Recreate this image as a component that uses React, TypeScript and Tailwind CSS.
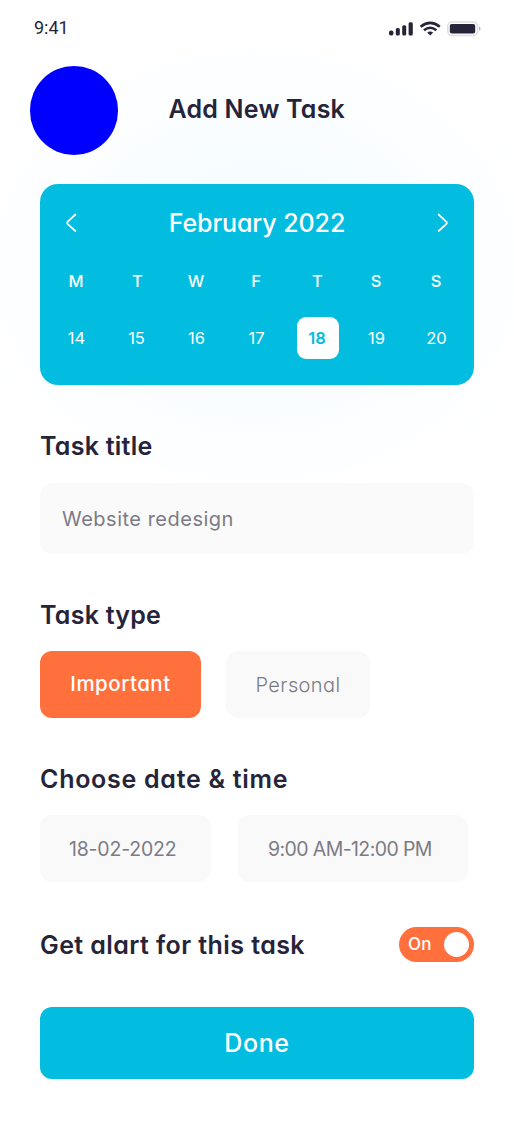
import { useState } from "react";

const days = [
  { name: "M", date: 14 },
  { name: "T", date: 15 },
  { name: "W", date: 16 },
  { name: "F", date: 17 },
  { name: "T", date: 18 },
  { name: "S", date: 19 },
  { name: "S", date: 20 },
];

function StatusBar() {
  return (
    <div className="flex h-14 items-center justify-between pl-[34px] pr-[33px]">
      <span className="font-[Roboto] text-[18px] leading-[18px]">9:41</span>
      <svg width="92" height="16" viewBox="0 0 92 16" className="mt-px" fill="#262438">
        <rect x="0" y="9.5" width="4.4" height="5" rx="1.8" />
        <rect x="6.8" y="7" width="4" height="7.5" rx="1.5" />
        <rect x="13.2" y="4.3" width="4" height="10.2" rx="1.5" />
        <rect x="19.6" y="1.2" width="4.2" height="13.3" rx="1.5" />
        <g fill="none" stroke="#262438" strokeWidth="2.5">
          <path d="M31.6 5.7 Q41.2 -2 50.8 5.7" />
          <path d="M35 9.3 Q41.2 4.2 47.4 9.3" />
        </g>
        <path d="M38.2 11.6 Q41.2 9.4 44.2 11.6 L41.2 14.6 Z" />
        <rect x="58.8" y="1" width="29.6" height="13.4" rx="4" fill="none" stroke="#dedee1" strokeWidth="1.5" />
        <rect x="60.8" y="3" width="25.4" height="9.6" rx="2" />
        <path d="M90 5.6 Q91.6 6 91.6 7.7 Q91.6 9.4 90 9.8 Z" fill="#b5b4bb" />
      </svg>
    </div>
  );
}

function Chevron({ flip = false }: { flip?: boolean }) {
  return (
    <svg width="12" height="20" viewBox="0 0 12 20" fill="none" stroke="white" strokeWidth="1.8" strokeLinecap="round" strokeLinejoin="round" className={flip ? "-scale-x-100" : ""}>
      <path d="M10.4 1.5 L3 8.4 Q1.4 10 3 11.4 L10.4 18" />
    </svg>
  );
}

function Calendar() {
  return (
    <section className="h-[201px] rounded-[18px] bg-[#03bde0] text-white">
      <div className="flex h-[77px] items-center justify-between px-[25px]">
        <button aria-label="Previous"><Chevron /></button>
        <h2 className="pt-px text-[25px] font-medium leading-none tracking-[-0.08px]">February 2022</h2>
        <button aria-label="Next"><Chevron flip /></button>
      </div>
      <div className="grid grid-cols-[repeat(7,60px)] pl-1.5 text-center text-[16.5px]">
        {days.map((d, i) => (
          <span key={i} className={i === 1 || i === 4 ? "h-10 pl-[3px] font-medium leading-10" : "h-10 font-medium leading-10"}>{d.name}</span>
        ))}
      </div>
      <div className="mt-4 grid grid-cols-[repeat(7,60px)] justify-items-center pl-[6.5px] text-[16.5px]">
        {days.map((d) => (
          <span
            key={d.date}
            className={
              d.date === 18
                ? "ml-[3px] flex size-[42px] items-center justify-center rounded-[9px] bg-white pr-[2px] pt-px font-semibold text-[#03bde0]"
                : "flex size-[42px] items-center justify-center pt-px"
            }
          >
            {d.date}
          </span>
        ))}
      </div>
    </section>
  );
}

export default function App() {
  const [on, setOn] = useState(true);
  return (
    <main className="h-[1125px] w-[514px] overflow-hidden bg-white bg-[radial-gradient(ellipse_290px_240px_at_257px_267px,#effbfe_0%,#f7fdff_40%,#fcfeff_75%,#ffffff_100%)] font-[Inter,sans-serif] text-[#262438] [font-feature-settings:'cv11']">
      <StatusBar />
      <header className="flex h-32 items-start pl-[30px] pt-2.5">
        <div className="h-[89px] w-[88px] rounded-full bg-[#0000ff]" />
        <h1 className="ml-[50.5px] mt-[31px] text-[25px] font-semibold leading-6 tracking-[0.2px]">Add New Task</h1>
      </header>
      <div className="px-10">
        <Calendar />

        <h2 className="mt-[49px] text-[25px] font-semibold leading-6 tracking-[0.25px]">Task title</h2>
        <div className="mt-[25px] flex h-[71px] items-center rounded-xl bg-[#fafafa] pl-[22px] text-[20px] tracking-[0.5px] text-[#7c7b85]">
          Website redesign
        </div>

        <h2 className="mt-[49px] text-[25px] font-semibold leading-6 tracking-[0.25px]">Task type</h2>
        <div className="mt-6 flex h-[67px] gap-[25px]">
          <button className="w-[161px] rounded-xl bg-[#ff703d] text-[20.5px] font-medium tracking-[0.5px] text-white">Important</button>
          <button className="w-[144px] rounded-xl bg-[#f9f9f9] text-[20px] font-light tracking-[0.4px] text-[#7c7b85]">Personal</button>
        </div>

        <h2 className="mt-[49px] text-[25px] font-semibold leading-6 tracking-[0.72px]">Choose date &amp; time</h2>
        <div className="mt-6 flex h-[67px] gap-[27px] text-[19.5px] text-[#7c7b85]">
          <div className="flex w-[171px] items-center rounded-xl bg-[#f9f9f9] pl-[29px] pt-0.5 tracking-[-0.2px]">18-02-2022</div>
          <div className="flex w-[230px] items-center rounded-xl bg-[#f9f9f9] pl-[30px] pt-0.5 tracking-[-0.6px]">9:00 AM-12:00 PM</div>
        </div>

        <div className="mt-[45px] flex h-[35px] items-center justify-between">
          <h2 className="text-[25px] font-semibold leading-6 tracking-[0.42px]">Get alart for this task</h2>
          <button
            role="switch"
            aria-checked={on}
            onClick={() => setOn(!on)}
            className="flex h-[35px] w-[75.5px] items-center justify-between rounded-full bg-[#ff703d] pl-[9.5px] pr-[5px] text-[17px] font-medium tracking-[0.3px] text-white"
          >
            <span className="pt-px">{on ? "On" : "Off"}</span>
            <span className="size-[25px] rounded-full bg-white" />
          </button>
        </div>

        <button className="mt-[45px] h-[72px] w-full rounded-xl bg-[#03bde0] pt-px text-[25px] font-medium tracking-[0.6px] text-white">Done</button>
      </div>
    </main>
  );
}
